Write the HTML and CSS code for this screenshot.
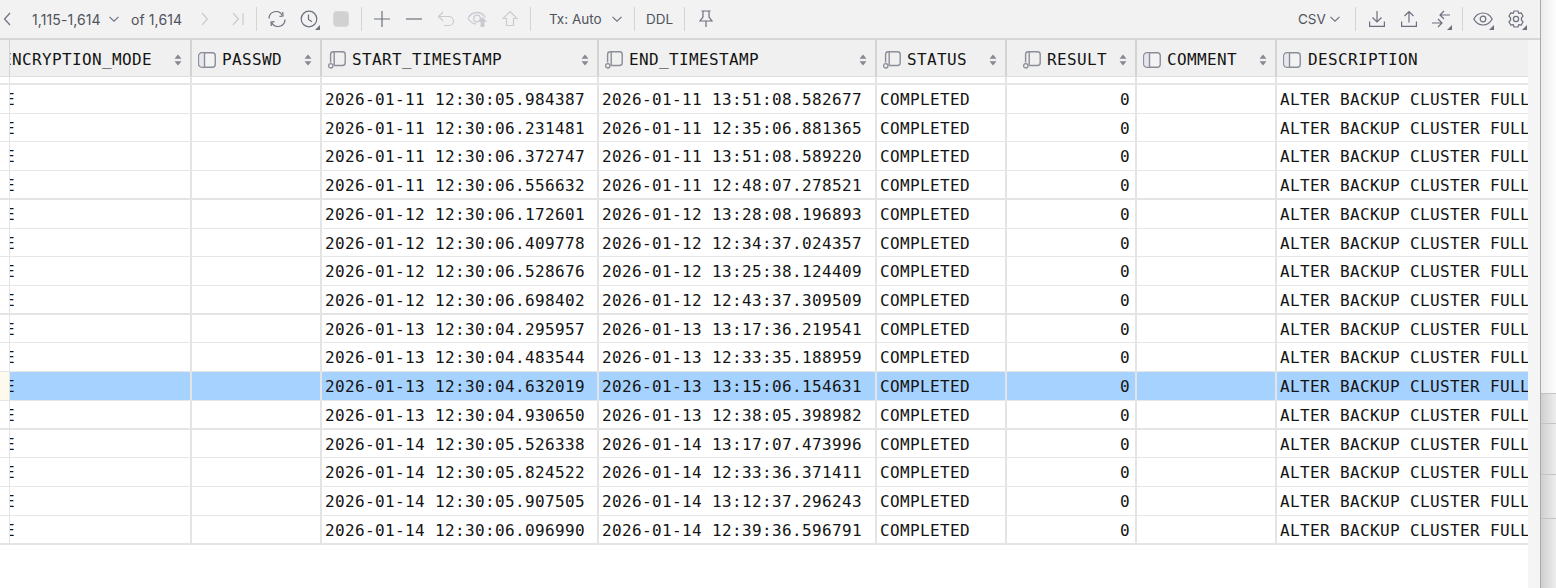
FILE: index.html
```html
<!DOCTYPE html>
<html lang="en">
<head>
<meta charset="utf-8">
<title>Data grid</title>
<link rel="stylesheet" href="styles.css">
</head>
<body>
<svg class="defs" width="0" height="0" aria-hidden="true">
  <symbol id="col" viewBox="0 0 18 16"><rect x=".75" y=".75" width="16.5" height="14.5" rx="3" fill="#f3f3f3" stroke="#8b8e98" stroke-width="1.4"/><path d="M1.400 3.700a2.300 2.300 0 0 1 2.300-2.300h2.800v13.200H3.700a2.300 2.300 0 0 1-2.300-2.300z" fill="#e6e8f0"/><path d="M6.500 1v14" stroke="#8b8e98" stroke-width="1.4"/></symbol>
  <symbol id="key" viewBox="0 0 18 18"><path d="M2.600 11.500V3.500A2.700 2.700 0 0 1 5.300.8h9.200a2.700 2.700 0 0 1 2.700 2.700v8.300a2.700 2.700 0 0 1-2.700 2.700H6.200M6.200 1v13.400" fill="none" stroke="#8b8e98" stroke-width="1.4"/><circle cx="2.800" cy="14.800" r="2.200" fill="none" stroke="#8b8e98" stroke-width="1.300"/></symbol>
  <symbol id="sort" viewBox="0 0 8 12"><path d="M4 0.500 7.500 4.800H.5zM4 11.500.5 7.200h7z" fill="#85888f"/></symbol>
  <symbol id="chev" viewBox="0 0 12 8"><path d="M1.500 1.800 6 6.200l4.500-4.400" fill="none" stroke="#6c707e" stroke-width="1.1"/></symbol>
  <symbol id="corner" viewBox="0 0 5 5"><path d="M5 0v5H0z" fill="#6c707e"/></symbol>
</svg>
<div class="window">
  <div class="toolbar">
    <svg class="i prev" width="8" height="14" viewBox="0 0 8 14"><path d="M7 1 1.500 7 7 13" fill="none" stroke="#6c707e" stroke-width="1.2"/></svg>
    <span class="label pages">1,115-1,614</span>
    <svg class="chev pages-chev" width="12" height="8"><use href="#chev"/></svg>
    <span class="label of">of 1,614</span>
    <svg class="i next" width="8" height="14" viewBox="0 0 8 14"><path d="M1 1l5.500 6L1 13" fill="none" stroke="#c9cbd1" stroke-width="1.2"/></svg>
    <svg class="i last" width="12" height="14" viewBox="0 0 12 14"><path d="M1 1l5.500 6L1 13M11 1v12" fill="none" stroke="#c9cbd1" stroke-width="1.2"/></svg>
    <span class="sep sep-a"></span>
    <span class="btn"><svg width="20" height="18" viewBox="0 0 20 18"><path d="M2 8.500A7 7 0 0 1 15.300 5.500M18 9.500A7 7 0 0 1 4.700 12.500" fill="none" stroke="#6c707e" stroke-width="1.2"/><path d="M12.500 6.300l3.500-.3-.3-4M7.500 11.700l-3.500.3.300 4" fill="none" stroke="#6c707e" stroke-width="1.2"/></svg></span>
    <span class="btn corner-host"><svg width="18" height="18" viewBox="0 0 18 18"><circle cx="9" cy="9" r="7.800" fill="none" stroke="#6c707e" stroke-width="1.2"/><path d="M8.500 4.500v5l3.500 2.200" fill="none" stroke="#6c707e" stroke-width="1.2"/></svg><svg class="corner" width="5" height="5"><use href="#corner"/></svg></span>
    <span class="btn"><svg width="16" height="16" viewBox="0 0 16 16"><rect x=".5" y=".5" width="15" height="15" rx="3" fill="#d1d1d1" stroke="#d8d8d8"/></svg></span>
    <span class="sep"></span>
    <span class="btn"><svg width="16" height="16" viewBox="0 0 16 16"><path d="M8 0v16M0 8h16" stroke="#6c707e" stroke-width="1.2"/></svg></span>
    <span class="btn"><svg width="16" height="16" viewBox="0 0 16 16"><path d="M0 8h16" stroke="#6c707e" stroke-width="1.2"/></svg></span>
    <span class="btn"><svg width="18" height="16" viewBox="0 0 18 16"><path d="M6 1 1.500 5.500 6 10M1.500 5.500H12a4.500 4.500 0 0 1 0 9H7" fill="none" stroke="#c9cbd1" stroke-width="1.2"/></svg></span>
    <span class="btn"><svg width="22" height="18" viewBox="0 0 22 18"><path d="M1 8.500C3 4.500 6.500 2.500 10 2.500s6.500 2 8.500 5M9 14c-3.300-.3-6-2.300-8-5.500" fill="none" stroke="#c9cbd1" stroke-width="1.3"/><circle cx="10" cy="8.500" r="3.300" fill="none" stroke="#c9cbd1" stroke-width="1.300"/><path d="M15.500 7l4.700 4.700h-2.700V17h-4v-5.300h-2.700z" fill="#c9cbd1"/></svg></span>
    <span class="btn"><svg width="16" height="18" viewBox="0 0 16 18"><path d="M8 1.500 15 8.500h-3.500v7h-7v-7H1z" fill="none" stroke="#c9cbd1" stroke-width="1.2"/></svg></span>
    <span class="sep"></span>
    <span class="label tx">Tx: Auto</span>
    <svg class="chev tx-chev" width="12" height="8"><use href="#chev"/></svg>
    <span class="sep sep-b"></span>
    <span class="label ddl">DDL</span>
    <span class="sep sep-c"></span>
    <svg class="i pin" width="14" height="18" viewBox="0 0 14 18"><path d="M2.500 1h9M4 1.200v5.800L1 11h12l-3-4V1.200M7 11v6" fill="none" stroke="#6c707e" stroke-width="1.2"/></svg>
    <span class="label csv">CSV</span>
    <svg class="chev csv-chev" width="12" height="8"><use href="#chev"/></svg>
    <span class="sep sep-d"></span>
    <span class="btn"><svg width="16" height="16" viewBox="0 0 16 16"><path d="M8 0v10.500M3.500 6.500 8 11l4.500-4.500M.6 10.500v4.800h14.800v-4.800" fill="none" stroke="#6c707e" stroke-width="1.2"/></svg></span>
    <span class="btn"><svg width="16" height="16" viewBox="0 0 16 16"><path d="M8 11.500V1M3.500 5 8 .6 12.500 5M.6 10.500v4.800h14.800v-4.800" fill="none" stroke="#6c707e" stroke-width="1.2"/></svg></span>
    <span class="btn corner-host"><svg width="20" height="18" viewBox="0 0 20 18"><path d="M19 5H9M13 1 9 5l4 4M1 13h10M7 9l4 4-4 4" fill="none" stroke="#6c707e" stroke-width="1.2"/></svg><svg class="corner" width="5" height="5"><use href="#corner"/></svg></span>
    <span class="sep sep-e"></span>
    <span class="btn corner-host"><svg width="20" height="14" viewBox="0 0 20 14"><path d="M.8 7C3 3 6.300 1 10 1s7 2 9.200 6c-2.200 4-5.500 6-9.200 6S3 11 .8 7z" fill="none" stroke="#6c707e" stroke-width="1.2"/><circle cx="10" cy="7" r="2.800" fill="none" stroke="#6c707e" stroke-width="1.2"/></svg><svg class="corner" width="5" height="5"><use href="#corner"/></svg></span>
    <span class="btn corner-host gear"><svg width="18" height="18" viewBox="0 0 18 18"><path d="M7 1h4l.7 2.400 2.400-.6 2 3.400-1.700 1.800 0 2 1.700 1.800-2 3.400-2.400-.6L11 17H7l-.7-2.400-2.400.6-2-3.400L3.600 10V8L1.900 6.200l2-3.400 2.400.6z" fill="none" stroke="#6c707e" stroke-width="1.200" stroke-linejoin="round"/><circle cx="9" cy="9" r="2.600" fill="none" stroke="#6c707e" stroke-width="1.2"/></svg><svg class="corner" width="5" height="5"><use href="#corner"/></svg></span>
  </div>
  <div class="data">
    <div class="grid">
      <div class="row head">
        <div class="cell gutter"></div>
        <div class="cell"><span class="scrolled-head">ENCRYPTION_MODE</span><svg class="sort" width="8" height="12"><use href="#sort"/></svg></div>
        <div class="cell"><svg class="colicon" width="18" height="16"><use href="#col"/></svg><span>PASSWD</span><svg class="sort" width="8" height="12"><use href="#sort"/></svg></div>
        <div class="cell"><svg class="colicon" width="18" height="18"><use href="#key"/></svg><span>START_TIMESTAMP</span><svg class="sort" width="8" height="12"><use href="#sort"/></svg></div>
        <div class="cell"><svg class="colicon" width="18" height="18"><use href="#key"/></svg><span>END_TIMESTAMP</span><svg class="sort" width="8" height="12"><use href="#sort"/></svg></div>
        <div class="cell"><svg class="colicon" width="18" height="18"><use href="#key"/></svg><span>STATUS</span><svg class="sort" width="8" height="12"><use href="#sort"/></svg></div>
        <div class="cell right"><svg class="colicon" width="18" height="18"><use href="#key"/></svg><span>RESULT</span><svg class="sort" width="8" height="12"><use href="#sort"/></svg></div>
        <div class="cell"><svg class="colicon" width="18" height="16"><use href="#col"/></svg><span>COMMENT</span><svg class="sort" width="8" height="12"><use href="#sort"/></svg></div>
        <div class="cell"><svg class="colicon" width="18" height="16"><use href="#col"/></svg><span>DESCRIPTION</span></div>
      </div>
      <div class="row spacer"><div class="cell"></div><div class="cell"></div><div class="cell"></div><div class="cell"></div><div class="cell"></div><div class="cell"></div><div class="cell"></div><div class="cell"></div><div class="cell"></div></div>
      <div class="row"><div class="cell"></div><div class="cell"><span class="scrolled">NONE</span></div><div class="cell"></div><div class="cell">2026-01-11 12:30:05.984387</div><div class="cell">2026-01-11 13:51:08.582677</div><div class="cell">COMPLETED</div><div class="cell num">0</div><div class="cell"></div><div class="cell">ALTER BACKUP CLUSTER FULL</div></div>
      <div class="row"><div class="cell"></div><div class="cell"><span class="scrolled">NONE</span></div><div class="cell"></div><div class="cell">2026-01-11 12:30:06.231481</div><div class="cell">2026-01-11 12:35:06.881365</div><div class="cell">COMPLETED</div><div class="cell num">0</div><div class="cell"></div><div class="cell">ALTER BACKUP CLUSTER FULL</div></div>
      <div class="row"><div class="cell"></div><div class="cell"><span class="scrolled">NONE</span></div><div class="cell"></div><div class="cell">2026-01-11 12:30:06.372747</div><div class="cell">2026-01-11 13:51:08.589220</div><div class="cell">COMPLETED</div><div class="cell num">0</div><div class="cell"></div><div class="cell">ALTER BACKUP CLUSTER FULL</div></div>
      <div class="row group-end"><div class="cell"></div><div class="cell"><span class="scrolled">NONE</span></div><div class="cell"></div><div class="cell">2026-01-11 12:30:06.556632</div><div class="cell">2026-01-11 12:48:07.278521</div><div class="cell">COMPLETED</div><div class="cell num">0</div><div class="cell"></div><div class="cell">ALTER BACKUP CLUSTER FULL</div></div>
      <div class="row"><div class="cell"></div><div class="cell"><span class="scrolled">NONE</span></div><div class="cell"></div><div class="cell">2026-01-12 12:30:06.172601</div><div class="cell">2026-01-12 13:28:08.196893</div><div class="cell">COMPLETED</div><div class="cell num">0</div><div class="cell"></div><div class="cell">ALTER BACKUP CLUSTER FULL</div></div>
      <div class="row"><div class="cell"></div><div class="cell"><span class="scrolled">NONE</span></div><div class="cell"></div><div class="cell">2026-01-12 12:30:06.409778</div><div class="cell">2026-01-12 12:34:37.024357</div><div class="cell">COMPLETED</div><div class="cell num">0</div><div class="cell"></div><div class="cell">ALTER BACKUP CLUSTER FULL</div></div>
      <div class="row"><div class="cell"></div><div class="cell"><span class="scrolled">NONE</span></div><div class="cell"></div><div class="cell">2026-01-12 12:30:06.528676</div><div class="cell">2026-01-12 13:25:38.124409</div><div class="cell">COMPLETED</div><div class="cell num">0</div><div class="cell"></div><div class="cell">ALTER BACKUP CLUSTER FULL</div></div>
      <div class="row group-end"><div class="cell"></div><div class="cell"><span class="scrolled">NONE</span></div><div class="cell"></div><div class="cell">2026-01-12 12:30:06.698402</div><div class="cell">2026-01-12 12:43:37.309509</div><div class="cell">COMPLETED</div><div class="cell num">0</div><div class="cell"></div><div class="cell">ALTER BACKUP CLUSTER FULL</div></div>
      <div class="row"><div class="cell"></div><div class="cell"><span class="scrolled">NONE</span></div><div class="cell"></div><div class="cell">2026-01-13 12:30:04.295957</div><div class="cell">2026-01-13 13:17:36.219541</div><div class="cell">COMPLETED</div><div class="cell num">0</div><div class="cell"></div><div class="cell">ALTER BACKUP CLUSTER FULL</div></div>
      <div class="row"><div class="cell"></div><div class="cell"><span class="scrolled">NONE</span></div><div class="cell"></div><div class="cell">2026-01-13 12:30:04.483544</div><div class="cell">2026-01-13 12:33:35.188959</div><div class="cell">COMPLETED</div><div class="cell num">0</div><div class="cell"></div><div class="cell">ALTER BACKUP CLUSTER FULL</div></div>
      <div class="row selected"><div class="cell"></div><div class="cell"><span class="scrolled">NONE</span></div><div class="cell"></div><div class="cell">2026-01-13 12:30:04.632019</div><div class="cell">2026-01-13 13:15:06.154631</div><div class="cell">COMPLETED</div><div class="cell num">0</div><div class="cell"></div><div class="cell">ALTER BACKUP CLUSTER FULL</div></div>
      <div class="row group-end"><div class="cell"></div><div class="cell"><span class="scrolled">NONE</span></div><div class="cell"></div><div class="cell">2026-01-13 12:30:04.930650</div><div class="cell">2026-01-13 12:38:05.398982</div><div class="cell">COMPLETED</div><div class="cell num">0</div><div class="cell"></div><div class="cell">ALTER BACKUP CLUSTER FULL</div></div>
      <div class="row"><div class="cell"></div><div class="cell"><span class="scrolled">NONE</span></div><div class="cell"></div><div class="cell">2026-01-14 12:30:05.526338</div><div class="cell">2026-01-14 13:17:07.473996</div><div class="cell">COMPLETED</div><div class="cell num">0</div><div class="cell"></div><div class="cell">ALTER BACKUP CLUSTER FULL</div></div>
      <div class="row"><div class="cell"></div><div class="cell"><span class="scrolled">NONE</span></div><div class="cell"></div><div class="cell">2026-01-14 12:30:05.824522</div><div class="cell">2026-01-14 12:33:36.371411</div><div class="cell">COMPLETED</div><div class="cell num">0</div><div class="cell"></div><div class="cell">ALTER BACKUP CLUSTER FULL</div></div>
      <div class="row"><div class="cell"></div><div class="cell"><span class="scrolled">NONE</span></div><div class="cell"></div><div class="cell">2026-01-14 12:30:05.907505</div><div class="cell">2026-01-14 13:12:37.296243</div><div class="cell">COMPLETED</div><div class="cell num">0</div><div class="cell"></div><div class="cell">ALTER BACKUP CLUSTER FULL</div></div>
      <div class="row group-end"><div class="cell"></div><div class="cell"><span class="scrolled">NONE</span></div><div class="cell"></div><div class="cell">2026-01-14 12:30:06.096990</div><div class="cell">2026-01-14 12:39:36.596791</div><div class="cell">COMPLETED</div><div class="cell num">0</div><div class="cell"></div><div class="cell">ALTER BACKUP CLUSTER FULL</div></div>
    </div>
    <div class="scrolltrack"></div>
  </div>
</div>
<div class="side">
  <div class="side-top"></div>
  <div class="side-a"></div>
  <div class="side-b"></div>
  <div class="side-c"></div>
  <div class="side-d"></div>
</div>
</body>
</html>
```

FILE: styles.css
```css
* { box-sizing: border-box; }
html, body { height: 100%; }
body {
  margin: 0;
  display: flex;
  height: 588px;
  overflow: hidden;
  background: #fff;
  font-family: "DejaVu Sans Mono", monospace;
}
.defs { position: absolute; }

.window {
  width: 1541px;
  flex: none;
  display: flex;
  flex-direction: column;
  border-right: 1px solid #a9a9a9;
}

/* Toolbar */
.toolbar {
  height: 40px;
  flex: none;
  display: flex;
  align-items: center;
  background: #f2f2f2;
  border-bottom: 2px solid #d6d6d6;
  font-family: Inter, "Noto Sans", sans-serif;
  font-size: 13.5px;
  color: #50535c;
}
.toolbar svg { flex: none; display: block; }
.label { white-space: nowrap; }
.btn {
  position: relative;
  width: 32px;
  height: 32px;
  flex: none;
  display: flex;
  align-items: center;
  justify-content: center;
}
.corner { position: absolute; right: 5px; bottom: 5px; }
.sep { width: 1px; height: 24px; flex: none; background: #d4d4d4; margin: 0 4px; }

.prev { margin-left: 3px; }
.pages { margin-left: 21px; width: 70px; font-size: 14px; letter-spacing: 0.1px; }
.pages-chev { margin-left: 6px; }
.of { margin-left: 11px; width: 52px; font-size: 14px; letter-spacing: 0.1px; }
.next { margin-left: 18px; }
.last { margin-left: 23px; }
.sep-a { margin: 0 4px 0 12px; }
.tx { margin-left: 14px; width: 55px; }
.tx-chev { margin-left: 7px; }
.sep-b { margin: 0 11px 0 11px; }
.ddl { width: 28px; }
.sep-c { margin: 0 14px 0 10px; }
.csv { margin-left: 585px; width: 29px; }
.csv-chev { margin-left: 2px; }
.sep-d { margin: 0 5px 0 14px; }
.sep-e { margin: 0 4px 0 5px; }
.gear { margin-left: 1px; }

/* Data grid */
.data { flex: 1; display: flex; min-height: 0; }
.grid { width: 1528px; flex: none; }
.scrolltrack { flex: 1; background: #f5f5f5; }

.row {
  display: grid;
  grid-template-columns: 10px 182px 130px 277px 278px 130px 130px 140px 251px;
  height: 28.73px;
  border-bottom: 1px solid #e6e6e6;
  font-size: 16px;
  letter-spacing: 0.37px;
  line-height: 29px;
  color: #141414;
  background: #fff;
}
.row.group-end { border-bottom: 2px solid #e4e4e4; }
.cell {
  min-width: 0;
  overflow: hidden;
  white-space: nowrap;
  padding-left: 3px;
  border-right: 2px solid #e4e4e4;
}
.row > .cell:first-child { padding: 0; border-right-width: 1px; }
.row > .cell:last-child { border-right: 0; }
.num { text-align: right; padding: 0 5px 0 0; }
.scrolled { margin-left: -38px; }

.selected { background: #a6d2ff; }
.selected > .cell:first-child { background: #fdf9ec; }

.head {
  height: 37px;
  background: #f0f0f0;
  border-bottom: 1px solid #dfdfdf;
  line-height: 36px;
}
.head .cell {
  display: flex;
  align-items: center;
  padding-top: 3px;
  padding-left: 6px;
  border-right-color: #d3d3d3;
}
.head > .cell:last-child { padding-left: 6px; }
.head > .cell:last-child .colicon { margin-right: 7px; }
.head .gutter { background: #f0f0f0; }
.head .right { justify-content: flex-end; padding-right: 0; }
.head .right .colicon { margin-left: 10px; }
.colicon { flex: none; margin-right: 6px; }
.sort { flex: none; margin-left: auto; margin-right: 8px; }
.head .right .sort { margin-left: 12px; }
.scrolled-head { margin-left: -14px; flex: none; }

.spacer {
  height: 8px;
  border-bottom: 2px solid #e6e6e6;
}

/* Neighbouring pane at the right edge */
.side { flex: 1; display: flex; flex-direction: column; }
.side > div { border-bottom: 1px solid #c4c4c4; background: linear-gradient(90deg, #cfcfcf, #ededed); }
.side .side-top { height: 394px; background: linear-gradient(90deg, #ececec, #fdfdfd); }
.side-a { height: 30px; }
.side-b { height: 51px; }
.side-c { height: 44px; }
.side .side-d { flex: 1; border-bottom: 0; }
```
